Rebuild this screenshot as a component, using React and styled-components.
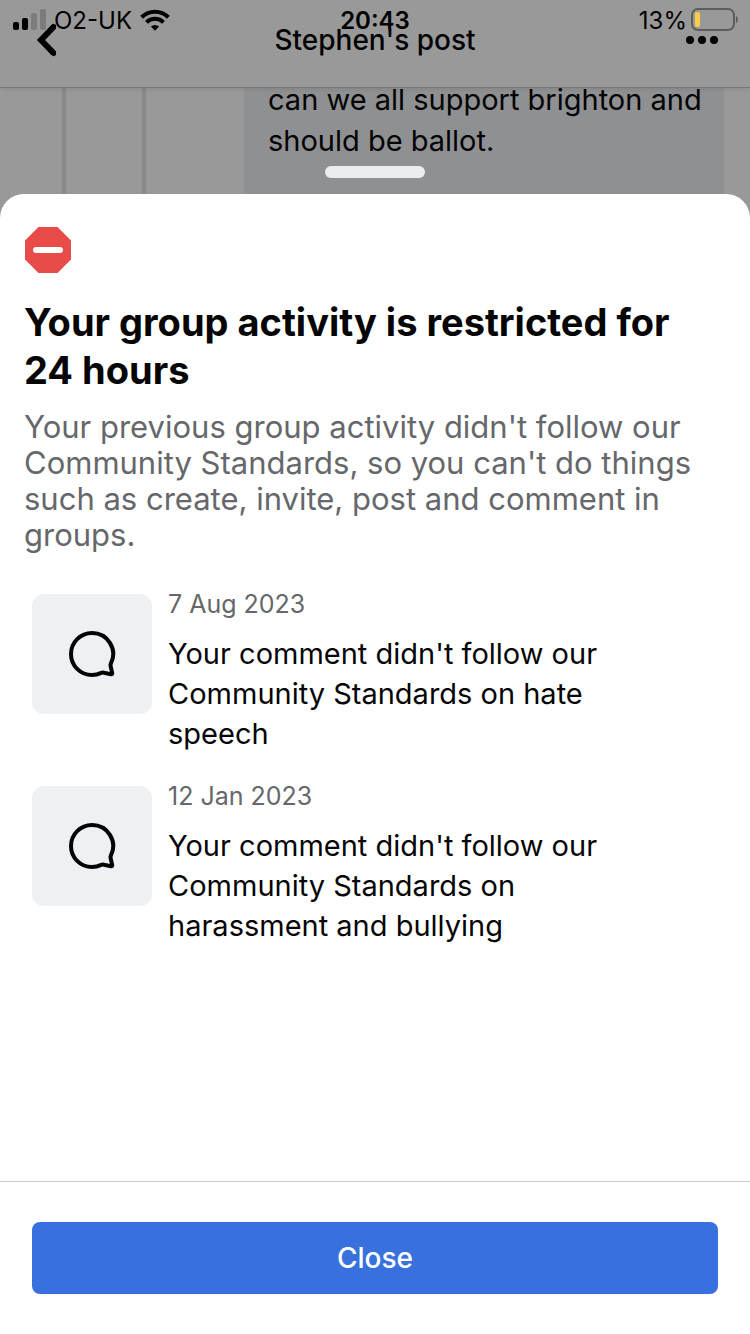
import React from 'react';
import styled, { createGlobalStyle } from 'styled-components';

const GlobalStyle = createGlobalStyle`
  * {
    box-sizing: border-box;
  }
  body {
    margin: 0;
    font-family: Inter, 'Liberation Sans', sans-serif;
    color: #050505;
  }
  h1, h2, p, ul {
    margin: 0;
    padding: 0;
  }
`;

const violations = [
  {
    date: '7 Aug 2023',
    text: "Your comment didn't follow our Community Standards on hate speech",
  },
  {
    date: '12 Jan 2023',
    text: "Your comment didn't follow our Community Standards on harassment and bullying",
  },
];

const SignalIcon = () => (
  <svg width="34" height="22" viewBox="0 0 34 22" aria-hidden="true">
    <rect x="1" y="13" width="6" height="8" rx="2" />
    <rect x="10" y="9" width="6" height="12" rx="2" />
    <rect x="19" y="4" width="6" height="17" rx="2" fill="#7c7c7c" />
    <rect x="28" y="0" width="6" height="21" rx="2" fill="#7c7c7c" />
  </svg>
);

const WifiIcon = () => (
  <svg width="30" height="22" viewBox="0 0 30 22" aria-hidden="true">
    <g fill="none" stroke="#000" strokeWidth="4">
      <path d="M1.6 8.2a19.2 19.2 0 0 1 26.8 0" />
      <path d="M6.5 13.4a12 12 0 0 1 17 0" />
    </g>
    <path d="M10.9 17.6a6 6 0 0 1 8.2 0L15 21.8z" />
  </svg>
);

const BatteryIcon = () => (
  <svg width="47" height="24" viewBox="0 0 47 24" aria-hidden="true">
    <rect x="1" y="1" width="42" height="21" rx="6" fill="none" stroke="#5d5d5d" strokeWidth="2" />
    <rect x="4" y="4" width="5" height="15" rx="2" fill="#f7ce46" />
    <path d="M45 8c2.5 1 2.5 6 0 7z" fill="#5d5d5d" />
  </svg>
);

const BackIcon = () => (
  <svg width="24" height="34" viewBox="-4 0 24 34" aria-hidden="true">
    <path
      d="M17.500 4L5 17l12.500 13"
      fill="none"
      stroke="#000"
      strokeWidth="6"
      strokeLinecap="round"
    />
  </svg>
);

const MoreIcon = () => (
  <svg width="32" height="8" viewBox="0 0 32 8" aria-hidden="true">
    <circle cx="4" cy="4" r="4" />
    <circle cx="16" cy="4" r="4" />
    <circle cx="28" cy="4" r="4" />
  </svg>
);

const StopIcon = () => (
  <svg width="48" height="48" viewBox="-1 -1 48 48" aria-hidden="true">
    <path d="M13.5 0h19L46 13.5v19L32.5 46h-19L0 32.5v-19z" fill="#e84c49" />
    <rect x="8" y="20" width="30" height="6" rx="3" fill="#fff" />
  </svg>
);

const CommentIcon = () => (
  <svg width="48" height="48" viewBox="0 0 48 48" aria-hidden="true">
    <path
      d="M24 3a21 21 0 1 0 0 42c3.6 0 6.5-.8 9.3-2.1.9-.4 1.7-.4 2.6-.2l7.2 1.500c.8.2 1.300-.3 1.100-1.100L42.700 36.500c-.3-1.1-.2-2.2.3-3.300A21 21 0 0 0 24 3z"
      fill="none"
      stroke="#050505"
      strokeWidth="4"
      strokeLinejoin="round"
    />
  </svg>
);

const App = () => {
  return (
    <Screen>
      <GlobalStyle />
      <Thread>
        <ThreadLine />
        <ThreadLine />
        <Bubble>can we all support brighton and should be ballot.</Bubble>
      </Thread>
      <NavBar>
        <NavButton type="button" aria-label="Back">
          <BackIcon />
        </NavButton>
        <NavTitle>Stephen's post</NavTitle>
        <NavButton type="button" aria-label="More">
          <MoreIcon />
        </NavButton>
      </NavBar>
      <Scrim />
      <StatusBar>
        <Carrier>
          <SignalIcon />
          <span>O2-UK</span>
          <WifiIcon />
        </Carrier>
        <Clock>20:43</Clock>
        <Battery>
          <span>13%</span>
          <BatteryIcon />
        </Battery>
      </StatusBar>
      <SheetLayer>
        <Handle />
        <Sheet role="dialog" aria-labelledby="sheet-title">
          <SheetBody>
            <StopIcon />
            <Title id="sheet-title">Your group activity is restricted for 24 hours</Title>
            <Description>
              Your previous group activity didn't follow our Community Standards, so you can't do
              things such as create, invite, post and comment in groups.
            </Description>
            <ViolationList>
              {violations.map((item) => (
                <Violation key={item.date}>
                  <Tile>
                    <CommentIcon />
                  </Tile>
                  <ViolationText>
                    <DateText>{item.date}</DateText>
                    <Reason>{item.text}</Reason>
                  </ViolationText>
                </Violation>
              ))}
            </ViolationList>
          </SheetBody>
          <Footer>
            <CloseButton type="button">Close</CloseButton>
          </Footer>
        </Sheet>
      </SheetLayer>
    </Screen>
  );
};

export default App;

const Screen = styled.div`
  position: relative;
  min-height: 100vh;
  background-color: #ffffff;
`;

const Thread = styled.div`
  position: absolute;
  inset: 0;
  display: flex;
  padding: 0 26px 0 62px;
`;

const ThreadLine = styled.div`
  flex: none;
  width: 4px;
  margin-right: 76px;
  background-color: #e4e5e9;
`;

const Bubble = styled.p`
  flex: 1;
  margin-left: 22px;
  padding: 79px 16px 0 24px;
  background-color: #eff1f4;
  font-size: 29px;
  line-height: 41px;
`;

const NavBar = styled.header`
  position: absolute;
  top: 0;
  left: 0;
  right: 0;
  display: grid;
  grid-template-columns: 1fr auto 1fr;
  align-items: center;
  height: 88px;
  padding: 0 32px 8px;
  background-color: #ffffff;
  border-bottom: 1px solid #c8c9cd;
  box-shadow: 0 1px 6px rgba(0, 0, 0, 0.1);
`;

const NavButton = styled.button`
  display: flex;
  align-items: center;
  justify-self: start;
  padding: 0;
  border: 0;
  background: none;
  &:last-child {
    justify-self: end;
  }
`;

const NavTitle = styled.h2`
  font-size: 28px;
  font-weight: 500;
  line-height: 40px;
`;

const Scrim = styled.div`
  position: absolute;
  inset: 0;
  background-color: rgba(0, 0, 0, 0.4);
`;

const StatusBar = styled.div`
  position: absolute;
  top: 0;
  left: 0;
  right: 0;
  display: grid;
  grid-template-columns: 1fr auto 1fr;
  align-items: center;
  height: 40px;
  padding: 0 12px;
  font-size: 24px;
  color: #000000;
`;

const Carrier = styled.div`
  display: flex;
  align-items: center;
  gap: 8px;
`;

const Clock = styled.span`
  font-weight: 600;
`;

const Battery = styled.div`
  display: flex;
  align-items: center;
  justify-content: flex-end;
  gap: 4px;
`;

const SheetLayer = styled.div`
  position: relative;
  display: flex;
  flex-direction: column;
  align-items: center;
  gap: 16px;
  min-height: 100vh;
  padding-top: 166px;
`;

const Handle = styled.div`
  width: 100px;
  height: 12px;
  border-radius: 6px;
  background-color: #ecedef;
`;

const Sheet = styled.section`
  flex: 1;
  display: flex;
  flex-direction: column;
  width: 100%;
  border-radius: 24px 24px 0 0;
  background-color: #ffffff;
`;

const SheetBody = styled.div`
  flex: 1;
  padding: 32px 24px;
  > svg {
    display: block;
  }
`;

const Title = styled.h1`
  margin-top: 24px;
  font-size: 38px;
  font-weight: 700;
  line-height: 48px;
`;

const Description = styled.p`
  margin-top: 15px;
  font-size: 31px;
  line-height: 36px;
  color: #65676b;
`;

const ViolationList = styled.ul`
  display: flex;
  flex-direction: column;
  gap: 32px;
  margin-top: 41px;
  list-style: none;
`;

const Violation = styled.li`
  display: flex;
  gap: 16px;
  padding: 0 80px 0 8px;
`;

const Tile = styled.div`
  flex: none;
  display: flex;
  align-items: center;
  justify-content: center;
  width: 120px;
  height: 120px;
  border-radius: 12px;
  background-color: #eff0f4;
`;

const ViolationText = styled.div`
  flex: 1;
`;

const DateText = styled.p`
  margin-bottom: 20px;
  font-size: 25px;
  line-height: 20px;
  color: #65676b;
`;

const Reason = styled.p`
  font-size: 29px;
  line-height: 40px;
`;

const Footer = styled.footer`
  padding: 40px 32px;
  border-top: 1px solid #c9cacc;
`;

const CloseButton = styled.button`
  width: 100%;
  height: 72px;
  border: 0;
  border-radius: 8px;
  background-color: #3871dd;
  color: #ffffff;
  font-family: inherit;
  font-size: 28px;
  font-weight: 500;
`;
